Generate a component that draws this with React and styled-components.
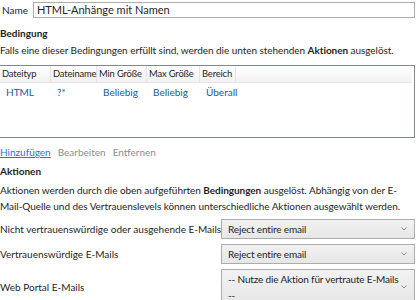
import React from 'react';
import styled, { createGlobalStyle } from 'styled-components';

const Global = createGlobalStyle`
  body {
    margin: 0;
    background: #fff;
    font-family: Lato, "Open Sans", sans-serif;
    font-size: 10px;
    color: #1e1e1e;
  }
`;

const Page = styled.div`
  width: 417px;
  height: 300px;
  overflow: hidden;
  padding-right: 2px;
  box-sizing: border-box;
`;

const NameRow = styled.div`
  display: flex;
  align-items: center;
  gap: 5px;
  padding: 2px 0 0 2px;
`;

const TextInput = styled.div`
  flex: 1;
  height: 14px;
  border: 1px solid #abadb3;
  padding: 0 3px;
  line-height: 14px;
  font-size: 11px;
`;

const Heading = styled.div`
  font-weight: 700;
  margin-top: ${p => p.top}px;
  line-height: 16px;
`;

const Para = styled.p`
  margin: ${p => p.top}px 0 0;
  line-height: 16px;
  letter-spacing: -0.05px;
  b { font-weight: 700; }
`;

const TableBox = styled.div`
  margin-top: 7px;
  height: 71px;
  border: 1px solid #828790;
  border-left: none;
`;

const HeaderRow = styled.div`
  display: flex;
  height: 16px;
  background: linear-gradient(#fff, #f2f2f2);
  border-bottom: 1px solid #e5e5e5;
  margin-right: 2px;
`;

const HeadCell = styled.div`
  width: ${p => p.w}px;
  padding-left: 2px;
  box-sizing: border-box;
  border-right: 1px solid #e5e5e5;
  line-height: 16px;
  font-size: 9.4px;
  letter-spacing: -0.15px;
  white-space: nowrap;
`;

const DataRow = styled.div`
  display: flex;
  height: 17px;
  align-items: center;
  color: #24559f;
`;

const DataCell = styled.div`
  width: ${p => p.w}px;
  padding-left: 6px;
  box-sizing: border-box;
  white-space: nowrap;
`;

const Links = styled.div`
  display: flex;
  gap: 7px;
  margin-top: 6px;
  line-height: 16px;
`;

const Action = styled.span`
  color: ${p => (p.active ? '#2f73cf' : '#8e8e8e')};
  text-decoration: ${p => (p.active ? 'underline' : 'none')};
`;

const FormRow = styled.div`
  display: grid;
  grid-template-columns: 221px 1fr;
  align-items: center;
  margin-top: 5px;
`;

const Label = styled.span`
  white-space: nowrap;
`;

const Select = styled.div`
  position: relative;
  border: 1px solid #acacac;
  background: linear-gradient(#f2f2f2, #e6e6e6);
  padding: 1px 10px 1px 6px;
  line-height: 16px;
  letter-spacing: -0.15px;
`;

const NoBreak = styled.span`
  white-space: nowrap;
`;

const Chevron = styled.svg`
  position: absolute;
  right: 7px;
  top: 50%;
  margin-top: -2px;
`;

const cols = [
  { h: 'Dateityp', d: 'HTML', w: 51 },
  { h: 'Dateiname', d: '?*', w: 46 },
  { h: 'Min Größe', d: 'Beliebig', w: 50 },
  { h: 'Max Größe', d: 'Beliebig', w: 53 },
  { h: 'Bereich', d: 'Überall', w: 36 },
];

const Dropdown = ({ children }) => (
  <Select>
    {children}
    <Chevron width="6" height="4" viewBox="0 0 6 4">
      <path d="M0.5 0.5 L3 3 L5.5 0.5" fill="none" stroke="#888" strokeWidth="1" />
    </Chevron>
  </Select>
);

export default function App() {
  return (
    <Page>
      <Global />
      <NameRow>
        Name
        <TextInput>HTML-Anhänge mit Namen</TextInput>
      </NameRow>
      <Heading top={7}>Bedingung</Heading>
      <Para top={1}>
        Falls eine dieser Bedingungen erfüllt sind, werden die unten stehenden <b>Aktionen</b> ausgelöst.
      </Para>
      <TableBox>
        <HeaderRow>
          {cols.map(c => (
            <HeadCell key={c.h} w={c.w}>{c.h}</HeadCell>
          ))}
        </HeaderRow>
        <DataRow>
          {cols.map(c => (
            <DataCell key={c.h} w={c.w}>{c.d}</DataCell>
          ))}
        </DataRow>
      </TableBox>
      <Links>
        <Action active>Hinzufügen</Action>
        <Action>Bearbeiten</Action>
        <Action>Entfernen</Action>
      </Links>
      <Heading top={3}>Aktionen</Heading>
      <Para top={3}>
        Aktionen werden durch die oben aufgeführten <b>Bedingungen</b> ausgelöst. Abhängig von der E-Mail-Quelle und des Vertrauenslevels können unterschiedliche Aktionen ausgewählt werden.
      </Para>
      <FormRow>
        <Label>Nicht vertrauenswürdige oder ausgehende E-Mails</Label>
        <Dropdown>Reject entire email</Dropdown>
      </FormRow>
      <FormRow>
        <Label>Vertrauenswürdige E-Mails</Label>
        <Dropdown>Reject entire email</Dropdown>
      </FormRow>
      <FormRow>
        <Label>Web Portal E-Mails</Label>
        <Dropdown>-- Nutze die Aktion für vertraute <NoBreak>E-Mails</NoBreak> --</Dropdown>
      </FormRow>
    </Page>
  );
}
